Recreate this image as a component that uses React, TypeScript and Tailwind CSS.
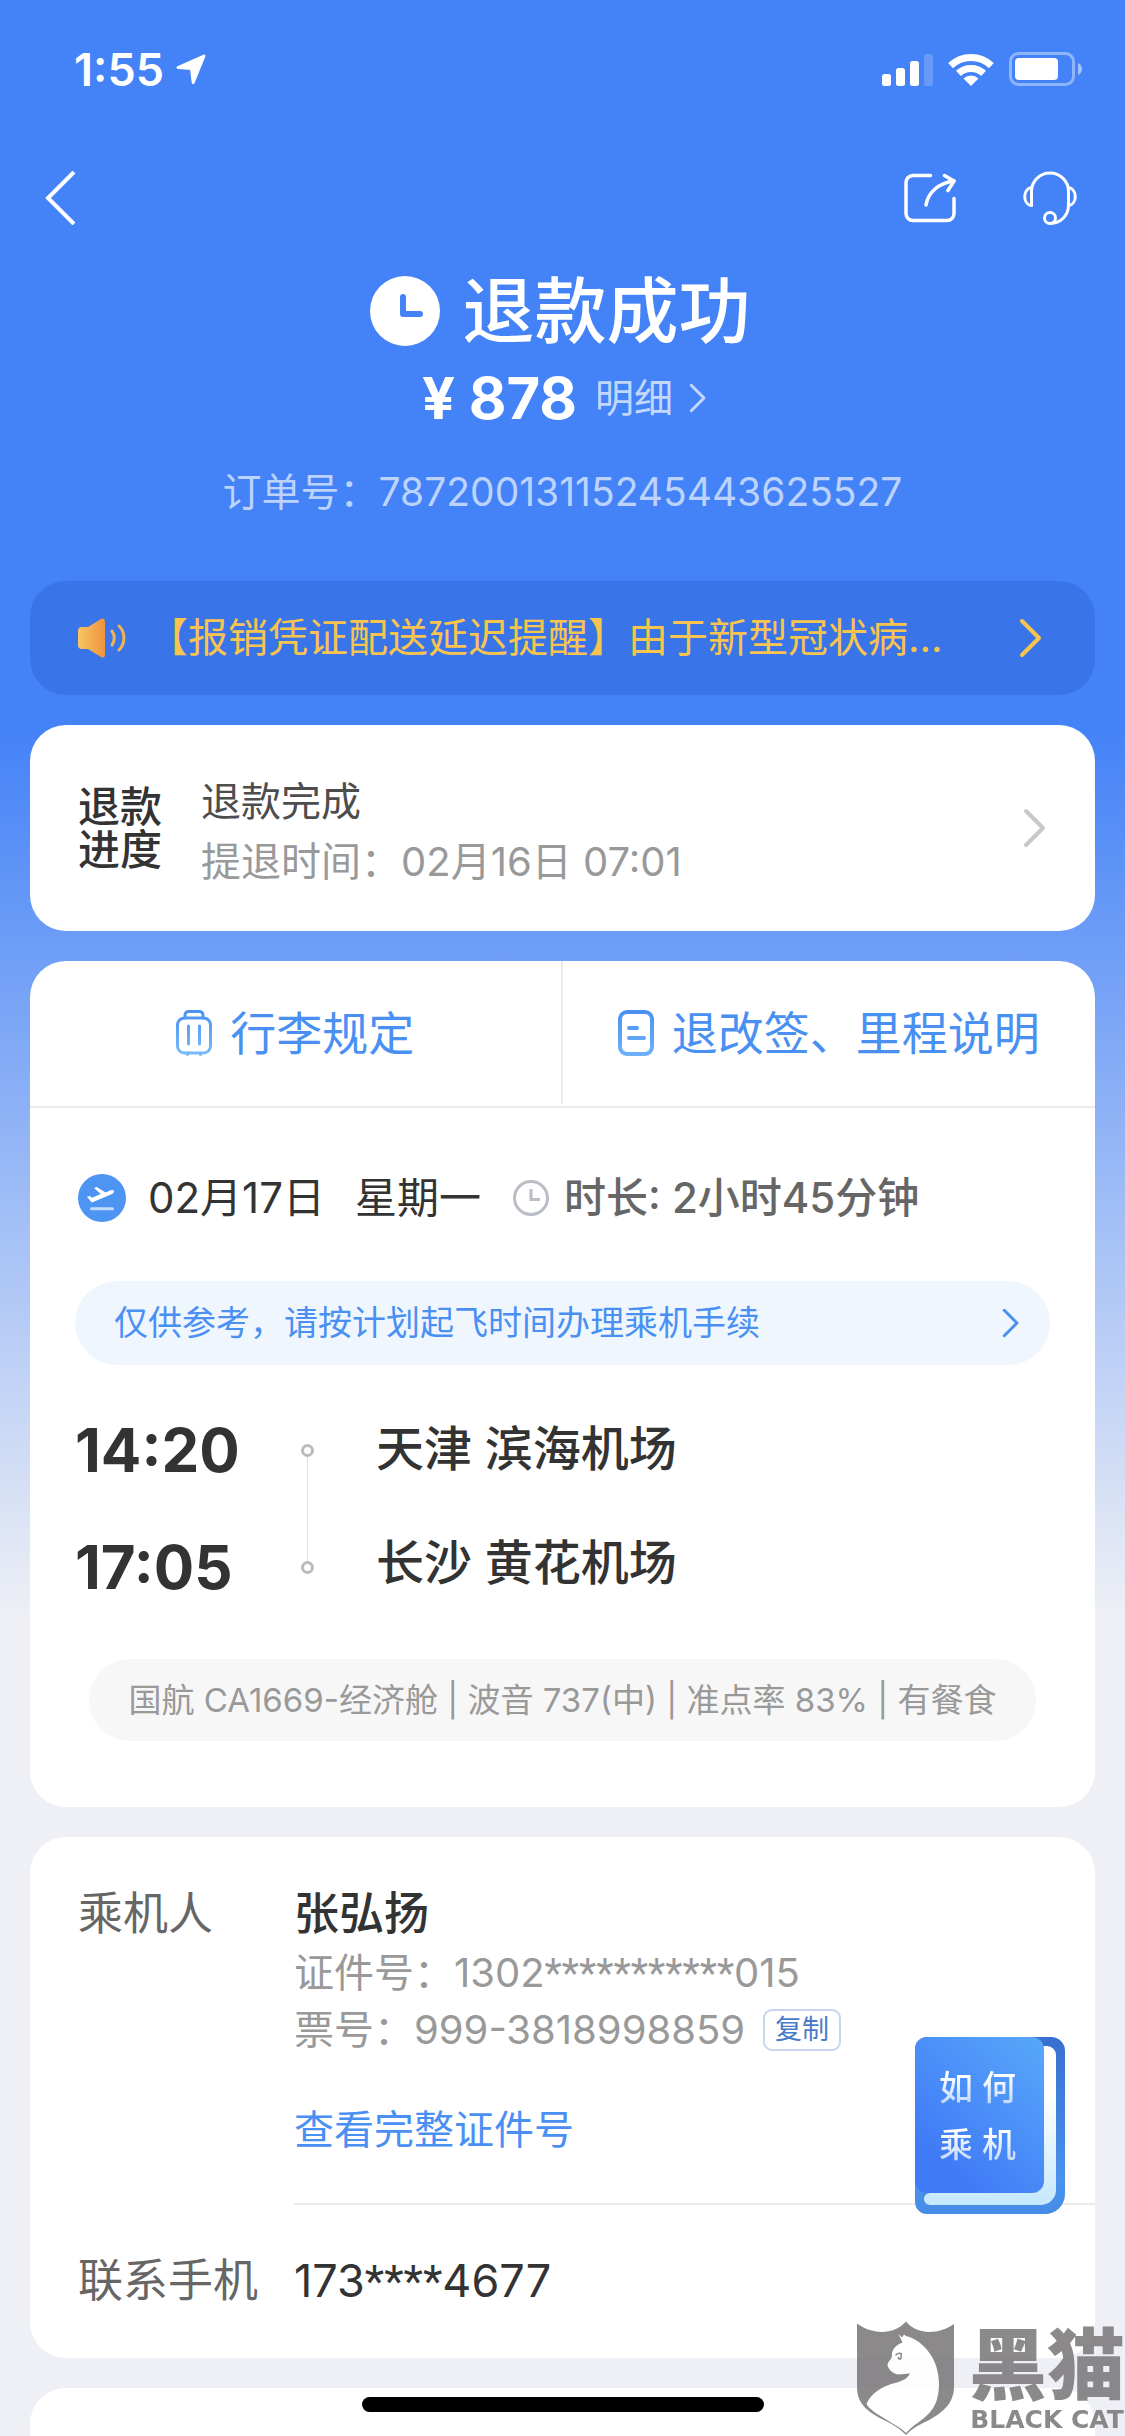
import { ReactNode } from 'react';
import clsx from 'clsx';

const Chevron = ({ className }: { className?: string }) => (
  <svg viewBox="0 0 24 40" fill="none" stroke="currentColor" strokeLinecap="round" strokeLinejoin="round" className={className} aria-hidden="true">
    <path d="M3 3L20 20L3 37" strokeWidth="4" />
  </svg>
);

const StatusBar = () => (
  <div className="flex h-[138px] items-center justify-between pl-[74px] pr-[43px]">
    <div className="flex items-center gap-3">
      <span className="text-[45px] leading-none font-semibold">1:55</span>
      <svg width="30" height="31" viewBox="0 0 30 31" fill="currentColor" stroke="currentColor" strokeWidth="3" strokeLinejoin="round" aria-hidden="true">
        <path d="M28 2L2 13.5L15.5 14.5L17.2 28.5Z" />
      </svg>
    </div>
    <div className="flex items-center gap-[15px]">
      <svg width="51" height="33" viewBox="0 0 51 33" fill="currentColor" aria-hidden="true">
        <rect x="0" y="21" width="9" height="12" rx="2.5" />
        <rect x="14" y="15" width="9" height="18" rx="2.5" />
        <rect x="28" y="8" width="9" height="25" rx="2.5" />
        <rect x="42" y="1" width="9" height="32" rx="2.5" opacity="0.2" />
      </svg>
      <svg width="46" height="33" viewBox="0 0 46 33" fill="none" stroke="currentColor" strokeWidth="7" aria-hidden="true">
        <path d="M2.6 12.6A29.5 29.5 0 0 1 43.4 12.6" />
        <path d="M10.4 20.4A18.5 18.5 0 0 1 35.6 20.4" />
        <path d="M23 33L15.5 25.5A11 11 0 0 1 30.5 25.5Z" fill="currentColor" stroke="none" />
      </svg>
      <svg width="73" height="34" viewBox="0 0 73 34" aria-hidden="true">
        <rect x="1.5" y="1.5" width="63" height="31" rx="8" fill="none" stroke="currentColor" strokeWidth="3" opacity="0.4" />
        <rect x="6" y="6" width="43" height="22" rx="4" fill="currentColor" />
        <path d="M69 11C71.5 12 73 14 73 17S71.5 22 69 23Z" fill="currentColor" opacity="0.5" />
      </svg>
    </div>
  </div>
);

const NavBar = () => (
  <nav className="flex h-[120px] items-center justify-between pl-[44px] pr-12">
    <button type="button" aria-label="返回">
      <svg width="33" height="54" viewBox="0 0 33 54" fill="none" stroke="currentColor" strokeWidth="4" aria-hidden="true">
        <path d="M30 1L4 27L30 53" />
      </svg>
    </button>
    <div className="flex items-center gap-[67px]">
      <button type="button" aria-label="分享">
        <svg width="52" height="50" viewBox="0 0 52 50" fill="none" stroke="currentColor" strokeWidth="3.5" strokeLinecap="round" strokeLinejoin="round" aria-hidden="true">
          <path d="M26.5 2.5H9a7 7 0 0 0-7 7V40.5a7 7 0 0 0 7 7H43a7 7 0 0 0 7-7V25.5" />
          <path d="M22 32C24 20 34 10 50 8" />
          <path d="M40.5 2.5L50 8L44 17.5" />
        </svg>
      </button>
      <button type="button" aria-label="客服">
        <svg width="54" height="54" viewBox="0 0 54 54" fill="none" stroke="currentColor" strokeWidth="3" strokeLinecap="round" strokeLinejoin="round" aria-hidden="true">
          <path d="M8.5 34.5V20.5A18.5 18.5 0 0 1 45.5 20.5V34C45.5 44 38 52.5 27 52.5" />
          <path d="M8.5 16.5C-0.5 18 -0.5 33.5 8.5 34.5" />
          <path d="M45.5 16.5C54.5 18 54.5 33.5 45.5 34.5" />
          <circle cx="27" cy="47" r="5.5" />
        </svg>
      </button>
    </div>
  </nav>
);

const RefundHeader = () => (
  <section className="flex flex-col items-center pt-2 pb-[61px]">
    <h1 className="flex h-[90px] items-center gap-[22px] pr-1 text-[72px] leading-[90px] font-medium">
      <svg width="70" height="70" viewBox="0 0 70 70" aria-hidden="true">
        <circle cx="35" cy="35" r="35" fill="#fff" />
        <path d="M33 21V38H50" fill="none" stroke="#4382f7" strokeWidth="6" strokeLinecap="round" strokeLinejoin="round" />
      </svg>
      退款成功
    </h1>
    <div className="flex h-[84px] items-center pl-1">
      <span className="text-[58px] leading-[84px] font-bold">¥ 878</span>
      <button type="button" className="ml-[18px] flex items-center gap-4 text-[39px] leading-[56px] text-[#c2d7fd]">
        明细
        <Chevron className="h-[30px] w-[18px]" />
      </button>
    </div>
    <p className="mt-6 text-[39px] leading-[56px] text-[#bcd3fd]">订单号：78720013115245443625527</p>
  </section>
);

const Notice = () => (
  <button type="button" className="flex h-[114px] items-center gap-[22px] rounded-[36px] bg-[#3975e8] pr-[52px] pl-[48px] text-left text-[#f8c44f]">
    <svg width="48" height="40" viewBox="0 0 48 40" fill="none" className="shrink-0" aria-hidden="true">
      <defs>
        <linearGradient id="speaker" x1="0" y1="0" x2="1" y2="0">
          <stop offset="0" stopColor="#f8c562" />
          <stop offset="1" stopColor="#ef9440" />
        </linearGradient>
      </defs>
      <path d="M0 13a4 4 0 0 1 4-4H10L23 1Q27 -1 27 4V36Q27 41 23 39L10 31H4a4 4 0 0 1-4-4Z" fill="url(#speaker)" />
      <path d="M34 13C37 17 37 23 34 27M41 8C47.5 14 47.5 26 41 32" stroke="#f3b455" strokeWidth="3" strokeLinecap="round" />
    </svg>
    <span className="min-w-0 flex-1 truncate text-[40px] leading-[56px]">【报销凭证配送延迟提醒】由于新型冠状病...</span>
    <Chevron className="h-10 w-6 shrink-0" />
  </button>
);

const Card = ({ className, children }: { className?: string; children?: ReactNode }) => (
  <section className={clsx('bg-white', className)}>{children}</section>
);

const RefundProgress = () => (
  <Card className="mt-[30px] flex h-[206px] items-center rounded-[36px] px-[48px]">
    <h2 className="text-[42px] leading-[43px] font-medium">
      退款
      <br />
      进度
    </h2>
    <div className="ml-[39px] flex-1 pt-2 text-[40px] leading-[60px]">
      <p className="text-[#4d4d4d]">退款完成</p>
      <p className="text-[#999]">提退时间：02月16日 07:01</p>
    </div>
    <button type="button" aria-label="查看退款进度" className="text-[#c8c8c8]">
      <Chevron className="h-10 w-6" />
    </button>
  </Card>
);

const FlightTabs = () => (
  <div className="grid h-[147px] grid-cols-2 divide-x-2 divide-[#ebebed] border-b-2 border-[#ebebed] pb-[2px] text-[46px] leading-[60px] text-[#4a90f2]">
    <button type="button" className="flex items-center justify-center gap-[18px]">
      <svg width="36" height="46" viewBox="0 0 36 46" fill="none" stroke="url(#bag)" strokeWidth="3" strokeLinecap="round" aria-hidden="true">
        <defs>
          <linearGradient id="bag" gradientUnits="userSpaceOnUse" x1="0" y1="0" x2="0" y2="46">
            <stop offset="0" stopColor="#4a90f2" />
            <stop offset="1" stopColor="#7cbdfa" />
          </linearGradient>
        </defs>
        <rect x="1.5" y="8" width="33" height="35" rx="7" />
        <path d="M9 8V5a3.5 3.5 0 0 1 3.5-3.5H23.5A3.5 3.5 0 0 1 27 5V8" />
        <path d="M12.5 16V34M23.5 16V34M11.5 43V44.5M24.5 43V44.5" />
      </svg>
      行李规定
    </button>
    <button type="button" className="flex items-center justify-center gap-[18px]">
      <svg width="36" height="46" viewBox="0 0 36 46" fill="none" stroke="url(#doc)" strokeWidth="4" strokeLinecap="round" aria-hidden="true">
        <defs>
          <linearGradient id="doc" gradientUnits="userSpaceOnUse" x1="0" y1="0" x2="0" y2="46">
            <stop offset="0" stopColor="#4a90f2" />
            <stop offset="1" stopColor="#6db2f9" />
          </linearGradient>
        </defs>
        <rect x="2" y="2" width="32" height="42" rx="7" />
        <path d="M11 18H19M11 28H26" />
      </svg>
      退改签、里程说明
    </button>
  </div>
);

const FlightDate = () => (
  <div className="flex h-[60px] items-center pl-[3px] text-[42px] leading-[60px] whitespace-nowrap">
    <svg width="48" height="48" viewBox="0 0 48 48" aria-hidden="true">
      <circle cx="24" cy="24" r="24" fill="#4d94f3" />
      <path d="M9 22.7L12 22L14 23.7L22.7 20L16 14L18.7 13L27.5 18.5L32.5 16.3Q35.5 15.5 36 17.3Q36 19 34 20L14.5 28.3Q13.5 28.5 13 27.8Z" fill="#fff" />
      <path d="M13.5 34.7H34.5" stroke="#c4dcfb" strokeWidth="3" strokeLinecap="round" />
    </svg>
    <span className="ml-[22px]">02月17日</span>
    <span className="ml-[30px]">星期一</span>
    <svg width="36" height="36" viewBox="0 0 36 36" fill="none" stroke="#b9bdc5" strokeWidth="3" className="ml-8" aria-hidden="true">
      <circle cx="18" cy="18" r="16.5" />
      <path d="M18 9V19.5H27" />
    </svg>
    <span className="ml-[15px] font-medium text-[#666]">时长: 2小时45分钟</span>
  </div>
);

const stops = [
  { time: '14:20', airport: '天津 滨海机场' },
  { time: '17:05', airport: '长沙 黄花机场' },
];

const FlightRoute = () => (
  <div className="mt-[27px] flex">
    <div className="w-[208px]">
      {stops.map((stop) => (
        <p key={stop.time} className="text-[60px] leading-[117px] font-bold">{stop.time}</p>
      ))}
    </div>
    <div className="flex w-[48px] flex-col items-center py-[52px]">
      <span className="size-[13px] rounded-full border-[3px] border-[#bbb]" />
      <span className="w-px flex-1 bg-[#e2e2e2]" />
      <span className="size-[13px] rounded-full border-[3px] border-[#bbb]" />
    </div>
    <div className="ml-[45px]">
      {stops.map((stop) => (
        <p key={stop.airport} className="text-[48px] leading-[114px] font-medium">{stop.airport}</p>
      ))}
    </div>
  </div>
);

const FlightCard = () => (
  <Card className="mt-[30px] rounded-[36px]">
    <FlightTabs />
    <div className="px-[45px] pt-[60px] pb-[66px]">
      <FlightDate />
      <button type="button" className="mt-[53px] flex h-[84px] w-full items-center justify-between rounded-full bg-[#eff6fe] pr-[30px] pl-[39px] text-[34px] leading-[48px] text-[#4a90f2]">
        仅供参考，请按计划起飞时间办理乘机手续
        <Chevron className="h-[30px] w-[18px]" />
      </button>
      <FlightRoute />
      <p className="mx-[14px] mt-[33px] flex h-[82px] items-center justify-center rounded-full bg-[#f7f7f7] text-[33px] leading-[48px] whitespace-nowrap text-[#999]">
        国航 CA1669-经济舱 | 波音 737(中) | 准点率 83% | 有餐食
      </p>
    </div>
  </Card>
);

const PassengerCard = () => (
  <Card className="mt-[30px] rounded-[36px] pl-[48px]">
    <dl className="grid grid-cols-[216px_1fr] text-[45px] leading-[60px]">
      <dt className="pt-[47px] text-[#666]">乘机人</dt>
      <dd className="border-b-2 border-[#ebebed] pt-[47px] pb-[45px]">
        <p className="font-medium">张弘扬</p>
        <div className="text-[40px] leading-[57px] text-[#999]">
          <p>
            证件号：1302<span className="font-['Roboto'] leading-none">***********</span>015
          </p>
          <p className="flex items-center">
            票号：999-3818998859
            <button type="button" className="ml-[18px] h-[42px] w-[78px] rounded-[9px] border-2 border-[#c6d6ef] text-[27px] leading-[36px] text-[#4a7bc8]">
              复制
            </button>
          </p>
          <a href="#id" className="mt-[43px] block text-[#4a90f2]">查看完整证件号</a>
        </div>
      </dd>
      <dt className="pt-[46px] pb-[47px] text-[#666]">联系手机</dt>
      <dd className="pt-[46px] pb-[47px]">
        173<span className="font-['Roboto'] leading-none">****</span>4677
      </dd>
    </dl>
  </Card>
);

const GuideButton = () => (
  <button type="button" className="fixed right-[60px] bottom-[222px] h-[177px] w-[150px]">
    <svg viewBox="0 0 150 177" className="absolute inset-0" aria-hidden="true">
      <defs>
        <linearGradient id="back" x1="0" y1="0" x2="0" y2="1">
          <stop offset="0" stopColor="#386fd2" />
          <stop offset="0.8" stopColor="#4a92ea" />
          <stop offset="1" stopColor="#458ce6" />
        </linearGradient>
        <linearGradient id="pages" x1="0" y1="0" x2="0" y2="1">
          <stop offset="0.3" stopColor="#fff" />
          <stop offset="1" stopColor="#c5e8fd" />
        </linearGradient>
        <linearGradient id="cover" x1="1" y1="0" x2="0.3" y2="0.9">
          <stop offset="0" stopColor="#58a8fa" />
          <stop offset="1" stopColor="#407af7" />
        </linearGradient>
      </defs>
      <path d="M12 0H136A14 14 0 0 1 150 14V157A20 20 0 0 1 130 177H12A12 12 0 0 1 0 165V12A12 12 0 0 1 12 0Z" fill="url(#back)" />
      <path d="M100 9H132A9 9 0 0 1 141 18V153A15 15 0 0 1 126 168H15A6 6 0 0 1 15 156H100Z" fill="url(#pages)" />
      <rect width="129" height="156" rx="12" fill="url(#cover)" />
    </svg>
    <span className="relative flex h-[177px] w-[129px] flex-col items-center pt-[22px] pr-1 text-[34px] leading-[57px] font-medium">
      <span className="bg-linear-to-b from-white from-30% to-[#a8c6f7] bg-clip-text text-transparent">如 何</span>
      <span className="bg-linear-to-b from-white from-30% to-[#a8c6f7] bg-clip-text text-transparent">乘 机</span>
    </span>
  </button>
);

const Watermark = () => (
  <div className="pointer-events-none fixed right-0 bottom-0 flex items-start gap-[15px] text-[#777576] opacity-85">
    <svg width="97" height="115" viewBox="0 0 97 115" aria-hidden="true">
      <path d="M0 2.5C14 13 36 15 49 0.5C61 15 83 13 97 3V66C97 84 83 94 66 102C58 106 54 109 49 114C44 109 40 106 31 101C12 92 0 84 0 66Z" fill="currentColor" />
      <path d="M41.5 13L45 16.5L47 13.5L49 15C68 20 82 40 82 62C82 84 74 92 62 101C56 105 53 108 49 112C44 107 38 104 30 99C20 93 13 89 9.5 83C14 72 26 65 38 62C46 60 51 57 53 52.5L41 53.5C36 53 31 48 30.5 44C31 40 35 38 35 35C34 29 39 24 45.5 21.5Z" fill="#fff" />
      <path d="M38.5 34.5Q41 31 45 33M41 36L42.5 38.5M44 33V37.5L42.5 38.5" fill="none" stroke="currentColor" strokeWidth="1.5" />
    </svg>
    <div className="flex flex-col items-center pt-[7px]">
      <span className="text-[78px] leading-[76px] font-black">黑猫</span>
      <span className="font-['DejaVu_Sans'] text-[25px] leading-[32px] font-bold">BLACK CAT</span>
    </div>
  </div>
);

const App = () => (
  <div className="flex min-h-screen flex-col overflow-x-hidden bg-[#eff0f5] bg-[linear-gradient(to_bottom,#4382f7_725px,#eff0f5_1620px)] font-['Inter','Noto_Sans_CJK_SC',sans-serif] text-[#333]">
    <header className="text-white">
      <StatusBar />
      <NavBar />
      <RefundHeader />
    </header>
    <main className="flex flex-1 flex-col px-[30px]">
      <Notice />
      <RefundProgress />
      <FlightCard />
      <PassengerCard />
      <Card className="mt-[30px] min-h-12 flex-1 rounded-t-[36px]" />
    </main>
    <GuideButton />
    <div className="fixed bottom-6 left-1/2 h-[15px] w-[402px] -translate-x-1/2 rounded-full bg-black" />
    <Watermark />
  </div>
);

export default App;
